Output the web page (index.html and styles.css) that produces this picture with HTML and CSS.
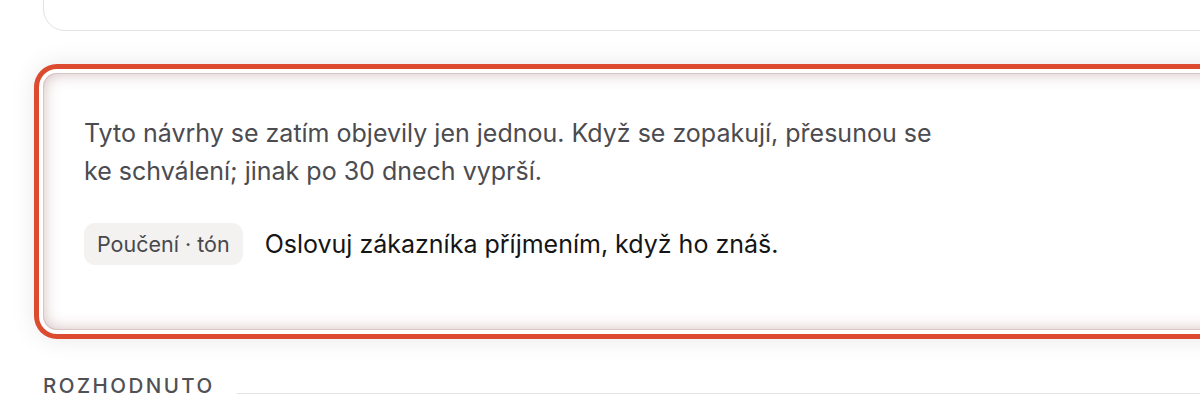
FILE: index.html
```html
<!DOCTYPE html>
<html>
<head>
    <title>Návrhy</title>
    <link rel="stylesheet" href="styles.css">
</head>
<body>
    <div class="page">
        <div class="card card-prev"></div>

        <div class="card card-pending">
            <p class="note">Tyto návrhy se zatím objevily jen jednou. Když se zopakují, přesunou se ke schválení; jinak po 30 dnech vyprší.</p>
            <div class="item">
                <span class="tag">Poučení · tón</span>
                <span class="item-text">Oslovuj zákazníka příjmením, když ho znáš.</span>
            </div>
        </div>

        <div class="section-head">
            <h3>Rozhodnuto</h3>
            <div class="rule"></div>
        </div>
    </div>
</body>
</html>
```

FILE: styles.css
```css
body {
    margin: 0;
    font-family: Inter, "Noto Sans", sans-serif;
    background: #fff;
    overflow: hidden;
}
.page {
    padding-left: 43px;
    width: 1250px;
}
.card {
    background: #fff;
    border-radius: 18px;
}
.card-prev {
    height: 80px;
    margin-top: -51px;
    border: 1px solid #e3e2e0;
    border-radius: 22px;
}
.card-pending {
    margin-top: 42px;
    height: 257px;
    box-sizing: border-box;
    padding: 41px 41px 0 41px;
    border-radius: 14px;
    box-shadow:
        inset 0 0 0 1px rgba(170, 120, 120, 0.25),
        inset 0 0 16px rgba(145, 85, 85, 0.42),
        0 0 0 4px #fff,
        0 0 0 9px #dc4a2f,
        0 0 26px 8px rgba(0, 0, 0, 0.1);
}
.note {
    margin: 0;
    max-width: 880px;
    font-size: 25px;
    line-height: 38px;
    color: #4b4b50;
}
.item {
    display: flex;
    align-items: center;
    gap: 22px;
    margin-top: 33px;
}
.tag {
    background: #f3f2f0;
    color: #48484c;
    font-size: 21.5px;
    line-height: 26px;
    padding: 8px 13px;
    border-radius: 11px;
}
.item-text {
    font-size: 25px;
    color: #151515;
}
.section-head {
    display: flex;
    align-items: flex-end;
    gap: 22px;
    margin-top: 43px;
}
.section-head h3 {
    margin: 0;
    font-size: 20.5px;
    font-weight: 500;
    letter-spacing: 0.12em;
    text-transform: uppercase;
    color: #505055;
}
.rule {
    flex: 1;
    height: 1px;
    background: #e2e2e2;
    margin-bottom: 4px;
}
```
